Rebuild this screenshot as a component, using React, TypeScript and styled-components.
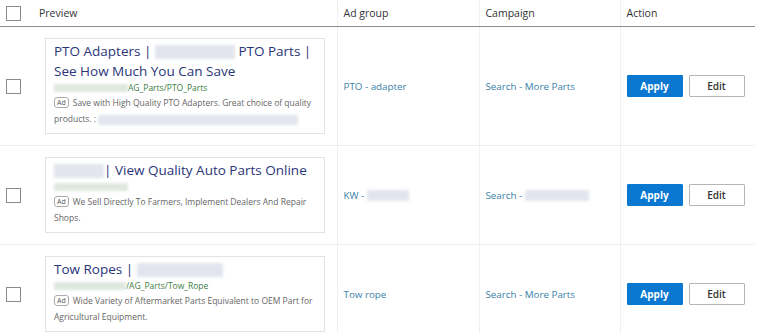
import React from 'react';
import styled, { createGlobalStyle } from 'styled-components';

const GlobalStyle = createGlobalStyle`
  html, body {
    margin: 0;
    padding: 0;
    background: #fff;
    overflow: hidden;
  }
  body {
    font-family: 'Open Sans', 'Noto Sans', sans-serif;
    color: #333;
  }
`;

interface Row {
  key: string;
  title: React.ReactNode;
  url: React.ReactNode;
  desc: React.ReactNode;
  adGroup: React.ReactNode;
  campaign: React.ReactNode;
}

const rows: Row[] = [
  {
    key: 'pto',
    title: (
      <>
        PTO Adapters | <Blur w={80} h={14} /> PTO Parts |<br />See How Much You Can Save
      </>
    ),
    url: (
      <>
        <Blur w={74} h={8} tone='green' />AG_Parts/PTO_Parts
      </>
    ),
    desc: (
      <>
        Save with High Quality PTO Adapters. Great choice of quality products. : <Blur w={200} h={10} />
      </>
    ),
    adGroup: 'PTO - adapter',
    campaign: 'Search - More Parts',
  },
  {
    key: 'kw',
    title: (
      <>
        <Blur w={50} h={14} />| View Quality Auto Parts Online
      </>
    ),
    url: <Blur w={74} h={8} tone='green' />,
    desc: 'We Sell Directly To Farmers, Implement Dealers And Repair Shops.',
    adGroup: (
      <>
        KW - <Blur w={42} h={11} />
      </>
    ),
    campaign: (
      <>
        Search - <Blur w={64} h={11} />
      </>
    ),
  },
  {
    key: 'tow',
    title: (
      <>
        Tow Ropes | <Blur w={86} h={14} />
      </>
    ),
    url: (
      <>
        <Blur w={72} h={8} tone='green' />/AG_Parts/Tow_Rope
      </>
    ),
    desc: 'Wide Variety of Aftermarket Parts Equivalent to OEM Part for Agricultural Equipment.',
    adGroup: 'Tow rope',
    campaign: 'Search - More Parts',
  },
];

function Blur({ w, h, tone = 'gray' }: { w: number; h: number; tone?: 'gray' | 'green' }) {
  return <BlurBox w={w} h={h} tone={tone} />;
}

export default function App(): JSX.Element {
  return (
    <Page>
      <GlobalStyle />
      <Table>
        <colgroup>
          <col style={{ width: 33 }} />
          <col style={{ width: 304 }} />
          <col style={{ width: 142 }} />
          <col style={{ width: 141 }} />
          <col style={{ width: 135 }} />
        </colgroup>
        <thead>
          <tr>
            <HeadCell>
              <Check />
            </HeadCell>
            <HeadCell>Preview</HeadCell>
            <HeadCell divider>Ad group</HeadCell>
            <HeadCell divider>Campaign</HeadCell>
            <HeadCell divider>Action</HeadCell>
          </tr>
        </thead>
        <tbody>
          {rows.map((r) => (
            <tr key={r.key}>
              <CheckCell>
                <Check />
              </CheckCell>
              <PreviewCell>
                <AdCard>
                  <AdTitle>{r.title}</AdTitle>
                  <AdUrl>{r.url}</AdUrl>
                  <AdDesc>
                    <AdBadge>Ad</AdBadge>
                    {r.desc}
                  </AdDesc>
                </AdCard>
              </PreviewCell>
              <LinkCell>{r.adGroup}</LinkCell>
              <LinkCell>{r.campaign}</LinkCell>
              <ActionCell>
                <Actions>
                  <ApplyButton>Apply</ApplyButton>
                  <EditButton>Edit</EditButton>
                </Actions>
              </ActionCell>
            </tr>
          ))}
        </tbody>
      </Table>
    </Page>
  );
}

const Page = styled.div`
  width: 760px;
  height: 333px;
  overflow: hidden;
`;

const Table = styled.table`
  width: 755px;
  border-collapse: collapse;
  table-layout: fixed;
`;

const HeadCell = styled.th<{ divider?: boolean }>`
  height: 26px;
  padding: 0 0 0 6px;
  text-align: left;
  font-size: 10.5px;
  font-weight: 400;
  color: #333;
  border-bottom: 1px solid #8c8c8c;
  border-left: ${({ divider }) => (divider ? '1px solid #f0f0f0' : 'none')};
  vertical-align: middle;
`;

const Check = styled.span`
  display: block;
  width: 13px;
  height: 13px;
  border: 1px solid #8a8a8a;
  background: #fff;
`;

const Cell = styled.td`
  border-bottom: 1px solid #efefef;
  vertical-align: middle;
`;

const CheckCell = styled(Cell)`
  padding: 0 0 0 6px;
`;

const PreviewCell = styled(Cell)`
  padding: 11px 12px 11px 12px;
`;

const LinkCell = styled(Cell)`
  padding: 0 0 0 6px;
  border-left: 1px solid #f0f0f0;
  font-size: 9.8px;
  color: #3b7fa8;
  white-space: nowrap;
`;

const ActionCell = styled(Cell)`
  padding: 0 0 0 6px;
  border-left: 1px solid #f0f0f0;
`;

const Actions = styled.div`
  display: flex;
  gap: 6px;
`;

const ButtonBase = styled.button`
  width: 56px;
  height: 22px;
  box-sizing: border-box;
  font-family: 'Open Sans', 'Noto Sans', sans-serif;
  font-size: 10px;
  padding: 0;
  border-radius: 1px;
`;

const ApplyButton = styled(ButtonBase)`
  background: #0a78d1;
  border: 1px solid #0a78d1;
  color: #fff;
  font-weight: 700;
`;

const EditButton = styled(ButtonBase)`
  background: #fff;
  border: 1px solid #b5b5b5;
  color: #333;
  font-weight: 600;
`;

const AdCard = styled.div`
  border: 1px solid #e3e3e3;
  padding: 2px 8px 6px 8px;
  background: #fff;
`;

const AdTitle = styled.div`
  font-size: 13.5px;
  line-height: 20px;
  color: #2a3578;
  white-space: nowrap;
`;

const AdUrl = styled.div`
  font-size: 8.5px;
  line-height: 14px;
  height: 14px;
  color: #3b7d3f;
  display: flex;
  align-items: center;
`;

const AdDesc = styled.div`
  font-size: 8.5px;
  line-height: 16px;
  color: #666;
`;

const AdBadge = styled.span`
  display: inline-block;
  font-size: 7px;
  line-height: 9px;
  padding: 0 2px;
  border: 1px solid #aaa;
  border-radius: 3px;
  color: #555;
  margin-right: 4px;
  vertical-align: 1px;
`;

const BlurBox = styled.span<{ w: number; h: number; tone: 'gray' | 'green' }>`
  display: inline-block;
  width: ${({ w }) => w}px;
  height: ${({ h }) => h}px;
  vertical-align: middle;
  background: ${({ tone }) => (tone === 'green' ? '#dfe8df' : '#e2e5ee')};
  filter: blur(1.5px);
`;
